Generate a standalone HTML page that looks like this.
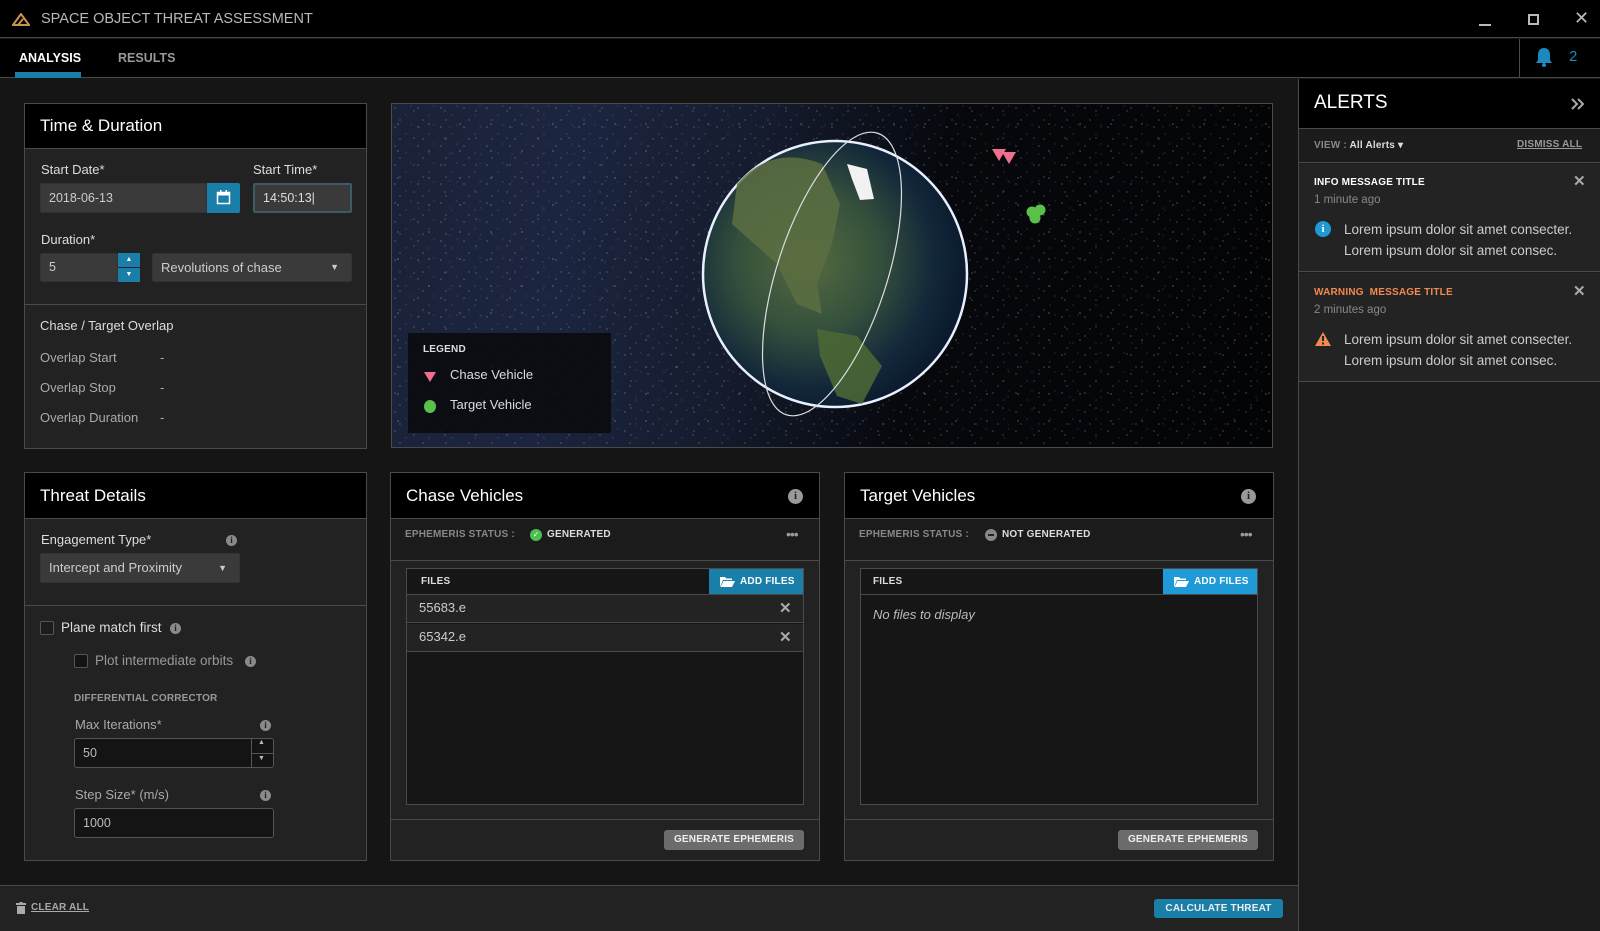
<!DOCTYPE html>
<html><head><meta charset="utf-8"><style>
*{box-sizing:border-box;margin:0;padding:0}
body{width:1600px;height:931px;overflow:hidden;background:#151515;font-family:"Liberation Sans",sans-serif;color:#ddd;position:relative}
.a{position:absolute}
.panel{position:absolute;border:1px solid #4a4a4a;background:#222}
.ph{position:absolute;left:0;right:0;top:0;background:#000;border-bottom:1px solid #4a4a4a;color:#fff;font-size:17px;padding-left:15px}
.lbl{position:absolute;font-size:13px;color:#ddd}
.inp{position:absolute;background:#3a3a3a;border:1px solid #333;border-radius:2px;font-size:12.5px;color:#ccc;padding-left:8px}
.inpd{position:absolute;background:#141414;border:1px solid #555;border-radius:3px;font-size:12.5px;color:#bbb;padding-left:8px}
.info{position:absolute;width:11px;height:11px;border-radius:50%;background:#8a8a8a;color:#222;font-size:9px;font-weight:bold;text-align:center;line-height:11px;font-family:"Liberation Serif",serif}
.cap{font-size:10px;font-weight:bold;letter-spacing:.2px}
.cb{position:absolute;width:14px;height:14px;border:1px solid #555;border-radius:2px;background:#1c1c1c}
.x{position:absolute;font-size:15px;color:#aaa;font-weight:bold}
</style></head><body>
<!-- title bar -->
<div class="a" style="left:0;top:0;width:1600px;height:38px;background:#000;border-bottom:1px solid #4a4a4a"></div>
<svg class="a" style="left:12px;top:13px" width="18" height="13" viewBox="0 0 18 13"><path d="M9 1L1 12H17Z" fill="none" stroke="#c8934a" stroke-width="2"/><path d="M6 12L11 6" stroke="#c8934a" stroke-width="2"/></svg>
<div class="a" style="left:41px;top:11px;font-size:14.5px;color:#b8b8b8">SPACE OBJECT THREAT ASSESSMENT</div>
<div class="a" style="left:1479px;top:24px;width:12px;height:2px;background:#bbb"></div>
<div class="a" style="left:1528px;top:14px;width:11px;height:11px;border:2px solid #bbb"></div>
<div class="a" style="left:1574px;top:8px;font-size:18px;color:#bbb">✕</div>
<!-- tabs -->
<div class="a" style="left:0;top:39px;width:1600px;height:39px;background:#000;border-bottom:1px solid #4a4a4a"></div>
<div class="a" style="left:19px;top:51px;font-size:12.5px;font-weight:bold;color:#fff">ANALYSIS</div>
<div class="a" style="left:15px;top:72px;width:66px;height:6px;background:#1a7fa8"></div>
<div class="a" style="left:118px;top:51px;font-size:12.5px;font-weight:bold;color:#999">RESULTS</div>
<div class="a" style="left:1519px;top:39px;width:1px;height:39px;background:#4a4a4a"></div>
<svg class="a" style="left:1535px;top:47px" width="18" height="20" viewBox="0 0 18 20"><path d="M9 1C5 1 3 4 3 8V13L1 16H17L15 13V8C15 4 13 1 9 1Z" fill="#1a8abf"/><circle cx="9" cy="18" r="2" fill="#1a8abf"/></svg>
<div class="a" style="left:1569px;top:48px;font-size:15px;color:#1a8abf">2</div>
<!-- right column -->
<div class="a" style="left:1298px;top:79px;width:302px;height:852px;background:#1b1b1b;border-left:1px solid #4a4a4a"></div>
<div class="a" style="left:1299px;top:79px;width:301px;height:50px;background:#000;border-bottom:1px solid #4a4a4a"></div>
<div class="a" style="left:1314px;top:92px;font-size:19px;color:#fff">ALERTS</div>
<svg class="a" style="left:1570px;top:97px" width="16" height="14"><path d="M2 2L7 7L2 12M8 2L13 7L8 12" fill="none" stroke="#aaa" stroke-width="2"/></svg>
<div class="a" style="left:1299px;top:130px;width:301px;height:33px;background:#1c1c1c;border-bottom:1px solid #4a4a4a"></div>
<div class="a cap" style="left:1314px;top:140px;color:#888">VIEW : <span style="color:#ddd">All Alerts ▾</span></div>
<div class="a cap" style="left:1517px;top:139px;color:#999;text-decoration:underline">DISMISS ALL</div>
<div class="a" style="left:1299px;top:164px;width:301px;height:108px;background:#232323;border-bottom:1px solid #4a4a4a"></div>
<div class="a cap" style="left:1314px;top:177px;color:#fff">INFO MESSAGE TITLE</div>
<div class="a" style="left:1314px;top:194px;font-size:11.5px;color:#888">1 minute ago</div>
<div class="x" style="left:1573px;top:172px">✕</div>
<div class="a" style="left:1315px;top:221px;width:16px;height:16px;border-radius:50%;background:#1e9bd7;color:#fff;font-size:11px;font-weight:bold;text-align:center;line-height:16px;font-family:'Liberation Serif',serif">i</div>
<div class="a" style="left:1344px;top:219px;font-size:13.5px;line-height:21px;color:#ccc">Lorem ipsum dolor sit amet consecter.<br>Lorem ipsum dolor sit amet consec.</div>
<div class="a" style="left:1299px;top:273px;width:301px;height:109px;background:#232323;border-bottom:1px solid #4a4a4a"></div>
<div class="a cap" style="left:1314px;top:287px;color:#f08a50">WARNING &nbsp;MESSAGE TITLE</div>
<div class="a" style="left:1314px;top:304px;font-size:11.5px;color:#888">2 minutes ago</div>
<div class="x" style="left:1573px;top:282px">✕</div>
<svg class="a" style="left:1314px;top:331px" width="18" height="16"><path d="M9 1L17 15H1Z" fill="#f08a50"/><rect x="8" y="5" width="2" height="5" fill="#222"/><rect x="8" y="11.5" width="2" height="2" fill="#222"/></svg>
<div class="a" style="left:1344px;top:329px;font-size:13.5px;line-height:21px;color:#ccc">Lorem ipsum dolor sit amet consecter.<br>Lorem ipsum dolor sit amet consec.</div>

<!-- Time & Duration -->
<div class="panel" style="left:24px;top:103px;width:343px;height:346px">
 <div class="ph" style="height:45px;line-height:44px">Time &amp; Duration</div>
</div>
<div class="lbl" style="left:41px;top:162px">Start Date*</div>
<div class="inp" style="left:40px;top:183px;width:167px;height:30px;line-height:28px">2018-06-13</div>
<div class="a" style="left:207px;top:183px;width:33px;height:30px;background:#1a7fa8;border-radius:0 2px 2px 0"></div>
<svg class="a" style="left:216px;top:189px" width="15" height="16"><rect x="1.5" y="3.5" width="12" height="11" fill="none" stroke="#fff" stroke-width="1.5"/><rect x="1.5" y="3.5" width="12" height="3" fill="#fff"/><rect x="4" y="1" width="1.5" height="4" fill="#fff"/><rect x="9.5" y="1" width="1.5" height="4" fill="#fff"/></svg>
<div class="lbl" style="left:253px;top:162px">Start Time*</div>
<div class="inp" style="left:253px;top:183px;width:99px;height:30px;line-height:26px;border:2px solid #3d5a68;color:#ddd">14:50:13|</div>
<div class="lbl" style="left:41px;top:232px">Duration*</div>
<div class="inp" style="left:40px;top:253px;width:78px;height:29px;line-height:27px">5</div>
<div class="a" style="left:118px;top:253px;width:22px;height:14px;background:#1a7fa8;color:#fff;font-size:7px;text-align:center;line-height:14px">▲</div>
<div class="a" style="left:118px;top:268px;width:22px;height:14px;background:#1a7fa8;color:#fff;font-size:7px;text-align:center;line-height:14px">▼</div>
<div class="inp" style="left:152px;top:253px;width:200px;height:29px;line-height:27px;font-size:13px">Revolutions of chase<span style="position:absolute;right:12px;font-size:9px;color:#ccc">▼</span></div>
<div class="a" style="left:25px;top:304px;width:341px;height:1px;background:#4a4a4a"></div>
<div class="lbl" style="left:40px;top:318px">Chase / Target Overlap</div>
<div class="lbl" style="left:40px;top:350px;color:#aaa">Overlap Start</div><div class="lbl" style="left:160px;top:350px;color:#aaa">-</div>
<div class="lbl" style="left:40px;top:380px;color:#aaa">Overlap Stop</div><div class="lbl" style="left:160px;top:380px;color:#aaa">-</div>
<div class="lbl" style="left:40px;top:410px;color:#aaa">Overlap Duration</div><div class="lbl" style="left:160px;top:410px;color:#aaa">-</div>

<!-- Map -->
<div class="a" style="left:391px;top:103px;width:882px;height:345px;border:1px solid #4a4a4a;overflow:hidden;background:linear-gradient(100deg,#1a2238 0%,#1c2540 20%,#151c2e 40%,#06080d 60%,#030405 100%)">
 <svg width="882" height="345" style="position:absolute;left:0;top:0">
  <defs>
   <radialGradient id="g" cx="40%" cy="45%" r="60%"><stop offset="0" stop-color="#566a40"/><stop offset=".45" stop-color="#34503c"/><stop offset=".8" stop-color="#12263a"/><stop offset="1" stop-color="#0b1a2c"/></radialGradient>
   <pattern id="st" width="23" height="19" patternUnits="userSpaceOnUse">
    <circle cx="3" cy="4" r=".6" fill="#ccd"/><circle cx="14" cy="11" r=".5" fill="#aab"/><circle cx="19" cy="2" r=".5" fill="#99a"/><circle cx="8" cy="16" r=".6" fill="#bbc"/>
   </pattern>
   <pattern id="st2" width="31" height="27" patternUnits="userSpaceOnUse">
    <circle cx="6" cy="20" r=".6" fill="#dde"/><circle cx="22" cy="7" r=".6" fill="#aab"/><circle cx="27" cy="23" r=".5" fill="#889"/>
   </pattern>
  </defs>
  <rect width="882" height="345" fill="url(#st)" opacity=".55"/>
  <rect width="882" height="345" fill="url(#st2)" opacity=".6"/>
  <ellipse cx="443" cy="170" rx="132" ry="133" fill="url(#g)" stroke="#e8f0ff" stroke-width="2.5"/>
  <path d="M345 80 Q380 40 430 60 L448 100 L440 140 L425 180 L430 210 L405 200 L385 160 L340 120Z" fill="#5c6e42" opacity=".85"/>
  <path d="M425 225 L465 232 L490 262 L470 300 L445 292 L428 252Z" fill="#4d6a35" opacity=".85"/>
  <path d="M455 60 L475 65 L482 95 L468 96 L460 75Z" fill="#f2f2f2"/>
  <ellipse cx="440" cy="170" rx="55" ry="148" transform="rotate(18 440 170)" fill="none" stroke="#ddd" stroke-width="1.2"/>
  <path d="M600 45 L614 45 L607 57Z M610 48 L624 48 L617 60Z" fill="#f06e8e"/>
  <circle cx="640" cy="108" r="5.5" fill="#5ac04a"/><circle cx="648" cy="106" r="5.5" fill="#5ac04a"/><circle cx="643" cy="114" r="5.5" fill="#5ac04a"/>
 </svg>
 <div class="a" style="left:16px;top:229px;width:203px;height:100px;background:rgba(10,10,12,.88)"></div>
 <div class="a cap" style="left:31px;top:240px;color:#ddd">LEGEND</div>
 <svg class="a" style="left:31px;top:267px" width="14" height="12"><path d="M1 1H13L7 11Z" fill="#f06e8e"/></svg>
 <div class="a" style="left:58px;top:263px;font-size:13px;color:#ddd">Chase Vehicle</div>
 <div class="a" style="left:32px;top:296px;width:12px;height:13px;border-radius:50%;background:#5ac04a"></div>
 <div class="a" style="left:58px;top:293px;font-size:13px;color:#ddd">Target Vehicle</div>
</div>

<!-- Threat Details -->
<div class="panel" style="left:24px;top:472px;width:343px;height:389px">
 <div class="ph" style="height:46px;line-height:46px">Threat Details</div>
</div>
<div class="lbl" style="left:41px;top:532px">Engagement Type*</div>
<div class="info" style="left:226px;top:535px">i</div>
<div class="inp" style="left:40px;top:553px;width:200px;height:30px;line-height:28px;font-size:13px">Intercept and Proximity<span style="position:absolute;right:12px;font-size:9px">▼</span></div>
<div class="a" style="left:25px;top:605px;width:341px;height:1px;background:#4a4a4a"></div>
<div class="cb" style="left:40px;top:621px"></div>
<div class="lbl" style="left:61px;top:620px;font-size:13.5px">Plane match first</div>
<div class="info" style="left:170px;top:623px">i</div>
<div class="cb" style="left:74px;top:654px;background:#141414"></div>
<div class="lbl" style="left:95px;top:653px;color:#999;font-size:13.5px">Plot intermediate orbits</div>
<div class="info" style="left:245px;top:656px">i</div>
<div class="a cap" style="left:74px;top:693px;color:#999">DIFFERENTIAL CORRECTOR</div>
<div class="lbl" style="left:75px;top:717px;color:#aaa">Max Iterations*</div>
<div class="info" style="left:260px;top:720px">i</div>
<div class="inpd" style="left:74px;top:738px;width:200px;height:30px;line-height:28px">50</div>
<div class="a" style="left:251px;top:739px;width:1px;height:28px;background:#555"></div>
<div class="a" style="left:252px;top:753px;width:21px;height:1px;background:#555"></div>
<div class="a" style="left:258px;top:739px;font-size:7px;color:#bbb">▲</div>
<div class="a" style="left:258px;top:755px;font-size:7px;color:#bbb">▼</div>
<div class="lbl" style="left:75px;top:787px;color:#aaa">Step Size* (m/s)</div>
<div class="info" style="left:260px;top:790px">i</div>
<div class="inpd" style="left:74px;top:808px;width:200px;height:30px;line-height:28px">1000</div>

<!-- Chase Vehicles -->
<div class="panel" style="left:390px;top:472px;width:430px;height:389px">
 <div class="ph" style="height:46px;line-height:46px">Chase Vehicles</div>
 <div class="a" style="left:0;right:0;top:46px;height:42px;background:#1b1b1b;border-bottom:1px solid #4a4a4a"></div>
 <div class="a" style="left:0;right:0;bottom:0;height:41px;border-top:1px solid #4a4a4a"></div>
</div>
<div class="info" style="left:788px;top:489px;width:15px;height:15px;line-height:15px;font-size:11px;background:#999">i</div>
<div class="a cap" style="left:405px;top:529px;color:#888">EPHEMERIS STATUS : </div>
<div class="a" style="left:530px;top:529px;width:12px;height:12px;border-radius:50%;background:#4cbf50;color:#fff;font-size:8px;text-align:center;line-height:12px">✓</div>
<div class="a cap" style="left:547px;top:529px;color:#ddd">GENERATED</div>
<div class="a" style="left:786px;top:526px;font-size:14px;color:#999;letter-spacing:-1px">•••</div>
<div class="a" style="left:406px;top:568px;width:398px;height:237px;border:1px solid #4a4a4a;background:#161616"></div>
<div class="a" style="left:407px;top:594px;width:396px;height:1px;background:#4a4a4a"></div>
<div class="a cap" style="left:421px;top:576px;color:#ddd">FILES</div>
<div class="a" style="left:709px;top:569px;width:94px;height:25px;background:#1a7fa8"></div>
<svg class="a" style="left:719px;top:576px" width="16" height="12"><path d="M1 1H6L7.5 2.5H13V4H4L1 11Z" fill="#fff"/><path d="M4.5 5H16L13 11H1.5Z" fill="#fff"/></svg>
<div class="a cap" style="left:740px;top:576px;color:#fff">ADD FILES</div>
<div class="a" style="left:407px;top:595px;width:396px;height:28px;background:#232323;border-bottom:1px solid #4a4a4a"></div>
<div class="a" style="left:419px;top:600px;font-size:13px;color:#ccc">55683.e</div>
<div class="x" style="left:779px;top:599px">✕</div>
<div class="a" style="left:407px;top:624px;width:396px;height:28px;background:#232323;border-bottom:1px solid #4a4a4a"></div>
<div class="a" style="left:419px;top:629px;font-size:13px;color:#ccc">65342.e</div>
<div class="x" style="left:779px;top:628px">✕</div>
<div class="a cap" style="left:664px;top:830px;width:140px;height:20px;background:#6c6c6c;border-radius:3px;color:#eee;text-align:center;line-height:20px">GENERATE EPHEMERIS</div>

<!-- Target Vehicles -->
<div class="panel" style="left:844px;top:472px;width:430px;height:389px">
 <div class="ph" style="height:46px;line-height:46px">Target Vehicles</div>
 <div class="a" style="left:0;right:0;top:46px;height:42px;background:#1b1b1b;border-bottom:1px solid #4a4a4a"></div>
 <div class="a" style="left:0;right:0;bottom:0;height:41px;border-top:1px solid #4a4a4a"></div>
</div>
<div class="info" style="left:1241px;top:489px;width:15px;height:15px;line-height:15px;font-size:11px;background:#999">i</div>
<div class="a cap" style="left:859px;top:529px;color:#888">EPHEMERIS STATUS : </div>
<div class="a" style="left:985px;top:529px;width:12px;height:12px;border-radius:50%;background:#888"><div style="position:absolute;left:3px;top:5px;width:6px;height:2px;background:#222"></div></div>
<div class="a cap" style="left:1002px;top:529px;color:#ddd">NOT GENERATED</div>
<div class="a" style="left:1240px;top:526px;font-size:14px;color:#999;letter-spacing:-1px">•••</div>
<div class="a" style="left:860px;top:568px;width:398px;height:237px;border:1px solid #4a4a4a;background:#161616"></div>
<div class="a" style="left:861px;top:594px;width:396px;height:1px;background:#4a4a4a"></div>
<div class="a cap" style="left:873px;top:576px;color:#ddd">FILES</div>
<div class="a" style="left:1163px;top:569px;width:94px;height:25px;background:#1e9bd7"></div>
<svg class="a" style="left:1173px;top:576px" width="16" height="12"><path d="M1 1H6L7.5 2.5H13V4H4L1 11Z" fill="#fff"/><path d="M4.5 5H16L13 11H1.5Z" fill="#fff"/></svg>
<div class="a cap" style="left:1194px;top:576px;color:#fff">ADD FILES</div>
<div class="a" style="left:873px;top:607px;font-size:13px;font-style:italic;color:#bbb">No files to display</div>
<div class="a cap" style="left:1118px;top:830px;width:140px;height:20px;background:#6c6c6c;border-radius:3px;color:#eee;text-align:center;line-height:20px">GENERATE EPHEMERIS</div>

<!-- footer -->
<div class="a" style="left:0;top:885px;width:1298px;height:46px;background:#222;border-top:1px solid #4a4a4a"></div>
<svg class="a" style="left:16px;top:902px" width="10" height="12"><rect x="0" y="1" width="10" height="2" fill="#aaa"/><rect x="3.5" y="0" width="3" height="1.5" fill="#aaa"/><rect x="1" y="4" width="8" height="8" fill="#aaa"/></svg>
<div class="a cap" style="left:31px;top:902px;color:#aaa;text-decoration:underline">CLEAR ALL</div>
<div class="a cap" style="left:1154px;top:899px;width:129px;height:19px;background:#1a7fa8;border-radius:3px;color:#eee;text-align:center;line-height:19px">CALCULATE THREAT</div>
</body></html>
